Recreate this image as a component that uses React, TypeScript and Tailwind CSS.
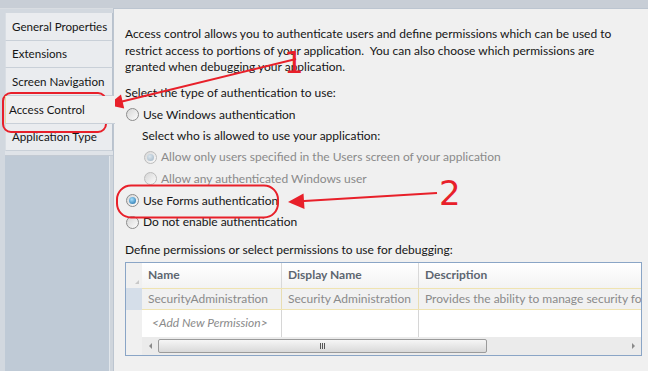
import React from "react";

function Radio({ checked = false, disabled = false }: { checked?: boolean; disabled?: boolean }) {
  return (
    <span
      className={`inline-flex w-[13px] h-[13px] rounded-full border ${
        disabled ? "border-[#bcbcbc]" : "border-[#8c8c8c]"
      } bg-linear-to-br from-[#d6d6d6] to-[#fcfcfc] items-center justify-center shrink-0`}
    >
      {checked && (
        <span
          className={`w-[7px] h-[7px] rounded-full ${
            disabled
              ? "bg-[radial-gradient(circle_at_40%_35%,#dbe6ee,#9fb3c3)]"
              : "bg-[radial-gradient(circle_at_40%_35%,#a6e0ff,#1768a3)]"
          }`}
        />
      )}
    </span>
  );
}

function Tab({ label, selected = false }: { label: string; selected?: boolean }) {
  if (selected) {
    return (
      <div className="h-[27.7px] w-[110px] flex items-center pl-[3px] bg-[#f0f0f0] border-l border-l-[#e8d9a0] border-b border-b-[#c9d0d8] relative z-10 whitespace-nowrap text-[11.6px]">
        {label}
      </div>
    );
  }
  return (
    <div className="h-[27.7px] w-[108px] flex items-center pl-[6px] bg-[#eaecef] border-b border-b-[#c9d0d8] border-r border-r-[#b9c2cd] border-l border-l-[#d9dee4] whitespace-nowrap overflow-hidden text-[11.6px]">
      {label}
    </div>
  );
}

export default function App() {
  return (
    <div className="w-[648px] h-[371px] relative overflow-hidden bg-[#d2d8df] font-['Segoe_UI','Lato',sans-serif] text-[12px] text-[#151515]">
      {/* top strip */}
      <div className="h-[9px] bg-[#c8ced6] border-b border-b-[#d9dde2]" />
      <div className="flex h-[362px]">
        {/* left nav */}
        <div className="w-[113px] shrink-0 flex flex-col pl-[5px] pt-[4px]">
          <Tab label="General Properties" />
          <Tab label="Extensions" />
          <Tab label="Screen Navigation" />
          <Tab label="Access Control" selected />
          <Tab label="Application Type" />
          <div className="h-[5px] w-[108px] bg-[#dfe3e8] border-b border-b-[#c3cad3]" />
          <div className="flex-1 w-[108px] flex">
            <div className="w-[104px] bg-[#bfcad6]" />
            <div className="w-[1px] bg-[#e1e6eb]" />
            <div className="w-[3px] bg-[#cfd5dc]" />
          </div>
        </div>
        {/* content */}
        <div className="flex-1 min-w-0 -mt-[1px] bg-[#f0f0f0] border-t border-l border-[#bcc5d0] pl-[11px] pt-[17px]">
          <div className="leading-[16.5px] whitespace-pre">
            <div>Access control allows you to authenticate users and define permissions which can be used to</div>
            <div>restrict access to portions of your application.  You can also choose which permissions are</div>
            <div>granted when debugging your application.</div>
          </div>
          <div className="mt-[6px] h-[22px] flex items-center">Select the type of authentication to use:</div>
          <div className="h-[22px] flex items-center gap-[4px] pl-[1px]">
            <Radio />
            <span>Use Windows authentication</span>
          </div>
          <div className="h-[21px] flex items-center pl-[17px]">Select who is allowed to use your application:</div>
          <div className="h-[21px] flex items-center gap-[4px] pl-[19px] text-[#8a8a8a]">
            <Radio checked disabled />
            <span>Allow only users specified in the Users screen of your application</span>
          </div>
          <div className="h-[22px] flex items-center gap-[4px] pl-[19px] text-[#8a8a8a]">
            <Radio disabled />
            <span>Allow any authenticated Windows user</span>
          </div>
          <div className="h-[22px] flex items-center gap-[4px] pl-[1px]">
            <Radio checked />
            <span>Use Forms authentication</span>
          </div>
          <div className="h-[21px] flex items-center gap-[4px] pl-[1px]">
            <Radio />
            <span>Do not enable authentication</span>
          </div>
          <div className="mt-[9px] h-[17px] flex items-center">Define permissions or select permissions to use for debugging:</div>

          {/* table */}
          <div className="mt-[3px] w-[517px] border border-[#8aa5c6] bg-[#f0f0f0] flex flex-col overflow-hidden">
            <div className="h-[25px] flex bg-linear-to-b from-[#ffffff] to-[#f3f3f3] font-bold text-[#5d6670] whitespace-nowrap">
              <div className="w-[16px] shrink-0 bg-[#f0f0f0] relative">
                <span className="absolute right-[3px] bottom-[4px] w-0 h-0 border-l-[4px] border-l-transparent border-b-[4px] border-b-[#c8c8c8]" />
              </div>
              <div className="w-[140px] shrink-0 border-r border-r-[#d9d9d9] flex items-center pl-[6px]">Name</div>
              <div className="w-[137px] shrink-0 border-r border-r-[#d9d9d9] flex items-center pl-[6px]">Display Name</div>
              <div className="flex-1 min-w-0 flex items-center pl-[6px]">Description</div>
            </div>
            <div className="h-[22px] flex text-[#8a8a8a] whitespace-nowrap">
              <div className="w-[16px] shrink-0 bg-[#d5dee9]" />
              <div className="flex-1 min-w-0 flex bg-[#f1f1f1] border-y border-y-[#efe3b0]">
                <div className="w-[140px] shrink-0 border-r border-r-[#e8ddb2] flex items-center pl-[6px] overflow-hidden">SecurityAdministration</div>
                <div className="w-[137px] shrink-0 border-r border-r-[#e8ddb2] flex items-center pl-[6px] overflow-hidden">Security Administration</div>
                <div className="flex-1 min-w-0 flex items-center pl-[6px] overflow-hidden">Provides the ability to manage security for this application</div>
              </div>
            </div>
            <div className="h-[27px] flex">
              <div className="w-[16px] shrink-0 bg-[#f0f0f0]" />
              <div className="w-[140px] shrink-0 bg-white border-r border-r-[#d6d6d6] flex items-center pl-[10px] italic text-[#8a8a8a] whitespace-nowrap">&lt;Add New Permission&gt;</div>
              <div className="w-[137px] shrink-0 bg-white border-r border-r-[#d6d6d6]" />
              <div className="flex-1 bg-white" />
            </div>
            <div className="h-[18px] flex">
              <div className="w-[16px] shrink-0 bg-[#f0f0f0]" />
              <div className="flex-1 flex bg-[#ebebeb] items-center">
                <div className="w-[16px] shrink-0 h-full flex items-center justify-center">
                  <span className="w-0 h-0 border-y-[3px] border-y-transparent border-r-[3px] border-r-[#8a8a8a]" />
                </div>
                <div className="w-[329px] shrink-0 h-[14px] rounded-[2px] border border-[#9b9b9b] bg-linear-to-b from-[#f6f6f6] to-[#d9d9d9] flex items-center justify-center gap-[1px]">
                  <span className="w-[1px] h-[6px] bg-[#555]" />
                  <span className="w-[1px] h-[6px] bg-[#555]" />
                  <span className="w-[1px] h-[6px] bg-[#555]" />
                </div>
                <div className="flex-1" />
                <div className="w-[16px] shrink-0 h-full flex items-center justify-center">
                  <span className="w-0 h-0 border-y-[3px] border-y-transparent border-l-[3px] border-l-[#8a8a8a]" />
                </div>
              </div>
            </div>
          </div>
        </div>
      </div>

      {/* red annotations */}
      <svg className="absolute left-0 top-0 pointer-events-none" width="648" height="371" viewBox="0 0 648 371">
        <rect x="3" y="93" width="103" height="39" rx="8" fill="none" stroke="#e8202a" strokeWidth="2" />
        <rect x="117" y="185.5" width="161" height="32" rx="14" fill="none" stroke="#e8202a" strokeWidth="2" />
        <line x1="296" y1="59" x2="120" y2="102" stroke="#e8202a" strokeWidth="2" />
        <polygon points="108,105 124.2,108.5 121,94.5" fill="#e8202a" />
        <line x1="437" y1="193" x2="300" y2="201.3" stroke="#e8202a" strokeWidth="2" />
        <polygon points="288,202 304.5,209 303.5,193.5" fill="#e8202a" />
        <text x="284" y="73" fontFamily="DejaVu Sans, sans-serif" fontSize="31" fill="#e8202a">1</text>
        <text x="439" y="205" fontFamily="DejaVu Sans, sans-serif" fontSize="34" fill="#e8202a">2</text>
      </svg>
    </div>
  );
}
